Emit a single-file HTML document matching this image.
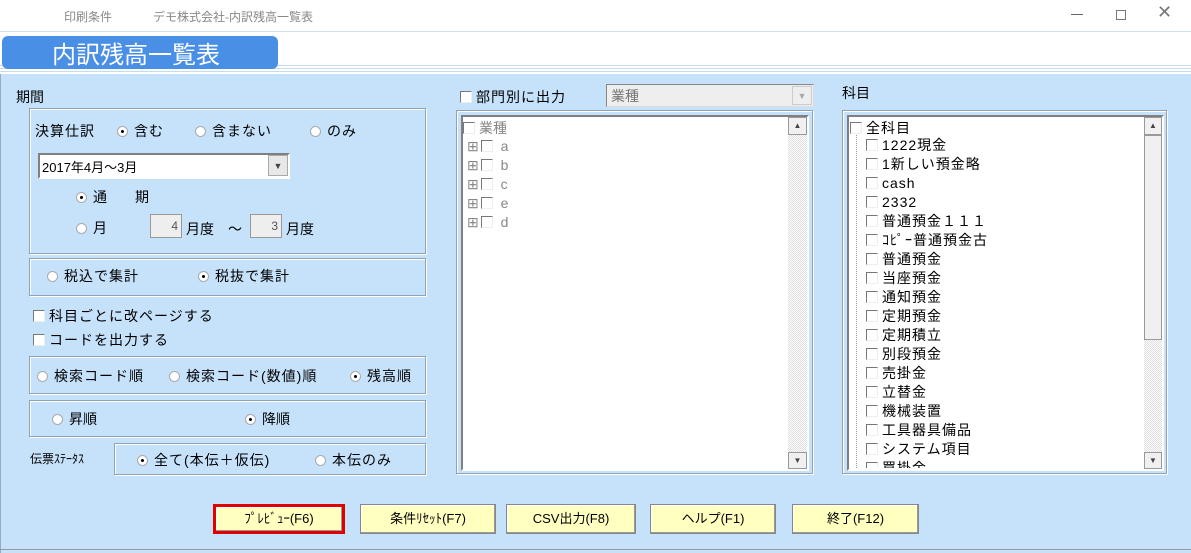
<!DOCTYPE html>
<html><head><meta charset="utf-8"><style>
*{box-sizing:border-box;margin:0;padding:0}
body{width:1191px;height:553px;overflow:hidden;background:#c6e2fb;font-family:"Liberation Sans","Noto Sans CJK JP",sans-serif;font-size:14px;color:#000;position:relative}
.a{position:absolute;white-space:nowrap}
.grp{position:absolute;border:1px solid #8fa3b8;box-shadow:inset 1px 1px 0 #fff,1px 1px 0 #fff}
.rb{display:inline-block;width:11px;height:11px;border-radius:50%;background:#fff;border:1px solid #aaa;vertical-align:-1px;margin-right:6px;position:relative}
.rb.on::after{content:"";position:absolute;left:3px;top:3px;width:3px;height:3px;background:#000;border-radius:50%}
.cb{display:inline-block;width:12px;height:12px;background:#fff;border-left:1px solid #777;border-top:1px solid #777;border-right:1px solid #eee;border-bottom:1px solid #eee;vertical-align:-1px;margin-right:4px}
.btn{position:absolute;top:504px;height:30px;background:#ffffc0;border:1px solid #888;box-shadow:inset -1px -1px 0 #999,inset 1px 1px 0 #fff;text-align:center;line-height:28px;font-size:13px}
.sunk{position:absolute;border:2px solid;border-color:#808080 #fff #fff #808080;background:#fff}
.ls{letter-spacing:1px}
</style></head><body>
<div class="a" style="left:0;top:0;width:1191px;height:32px;background:#fff"></div>
<div class="a" style="left:64px;top:8px;font-size:12px;color:#888">印刷条件</div>
<div class="a" style="left:153px;top:8px;font-size:12px;color:#888">デモ株式会社-内訳残高一覧表</div>
<div class="a" style="left:1071px;top:14px;width:12px;height:1px;background:#666"></div>
<div class="a" style="left:1116px;top:10px;width:10px;height:10px;border:1px solid #777"></div>
<div class="a" style="left:1157px;top:2px;font-size:18px;color:#777">✕</div>
<div class="a" style="left:0;top:31px;width:1191px;height:1px;background:#cfe0ee"></div>
<div class="a" style="left:0;top:32px;width:1191px;height:42px;background:#fff"></div>
<div class="a" style="left:0;top:65px;width:1191px;height:1px;background:#c6dcee"></div>
<div class="a" style="left:0;top:68px;width:1191px;height:1px;background:#c6dcee"></div>
<div class="a" style="left:0;top:71px;width:1191px;height:1px;background:#c6dcee"></div>
<div class="a" style="left:2px;top:36px;width:276px;height:33px;background:#4a8fe6;border-radius:6px"></div>
<div class="a" style="left:52px;top:35px;font-size:24px;color:#fff">内訳残高一覧表</div>
<div class="a" style="left:0;top:74px;width:1191px;height:479px;background:#c6e2fb;border-left:1px solid #9ab"></div>
<div class="a" style="left:0;top:549px;width:1191px;height:1px;background:#999"></div>

<div class="a" style="left:16px;top:87px">期間</div>
<div class="grp" style="left:29px;top:108px;width:397px;height:146px"></div>
<div class="a ls" style="left:35px;top:121px">決算仕訳</div>
<div class="a ls" style="left:117px;top:121px"><span class="rb on"></span>含む</div>
<div class="a ls" style="left:195px;top:121px"><span class="rb"></span>含まない</div>
<div class="a ls" style="left:310px;top:121px"><span class="rb"></span>のみ</div>
<div class="sunk" style="left:38px;top:153px;width:252px;height:26px"></div>
<div class="a" style="left:42px;top:157px;font-size:13px">2017年4月～3月</div>
<div class="a" style="left:268px;top:155px;width:20px;height:21px;background:#e8e8e8;border:1px solid #aaa;text-align:center;font-size:9px;line-height:20px;color:#444">▼</div>
<div class="a" style="left:76px;top:187px"><span class="rb on"></span>通　　期</div>
<div class="a" style="left:76px;top:218px"><span class="rb"></span>月</div>
<div class="a" style="left:150px;top:214px;width:32px;height:24px;background:#eee;border:1px solid #999;text-align:right;padding-right:3px;font-size:12px;line-height:22px;color:#555">4</div>
<div class="a" style="left:186px;top:219px">月度　～</div>
<div class="a" style="left:250px;top:214px;width:32px;height:24px;background:#eee;border:1px solid #999;text-align:right;padding-right:3px;font-size:12px;line-height:22px;color:#555">3</div>
<div class="a" style="left:286px;top:219px">月度</div>

<div class="grp" style="left:29px;top:258px;width:397px;height:38px"></div>
<div class="a ls" style="left:47px;top:266px"><span class="rb"></span>税込で集計</div>
<div class="a ls" style="left:198px;top:266px"><span class="rb on"></span>税抜で集計</div>
<div class="a ls" style="left:33px;top:306px"><span class="cb"></span>科目ごとに改ページする</div>
<div class="a ls" style="left:33px;top:330px"><span class="cb"></span>コードを出力する</div>
<div class="grp" style="left:29px;top:356px;width:397px;height:38px"></div>
<div class="a ls" style="left:37px;top:366px"><span class="rb"></span>検索コード順</div>
<div class="a ls" style="left:169px;top:366px"><span class="rb"></span>検索コード(数値)順</div>
<div class="a ls" style="left:350px;top:366px"><span class="rb on"></span>残高順</div>
<div class="grp" style="left:29px;top:400px;width:397px;height:37px"></div>
<div class="a" style="left:52px;top:409px"><span class="rb"></span>昇順</div>
<div class="a" style="left:245px;top:409px"><span class="rb on"></span>降順</div>
<div class="a" style="left:30px;top:450px;font-size:12px">伝票ｽﾃｰﾀｽ</div>
<div class="grp" style="left:114px;top:443px;width:312px;height:32px"></div>
<div class="a ls" style="left:137px;top:450px"><span class="rb on"></span>全て(本伝＋仮伝)</div>
<div class="a ls" style="left:315px;top:450px"><span class="rb"></span>本伝のみ</div>

<div class="a ls" style="left:460px;top:87px"><span class="cb"></span>部門別に出力</div>
<div class="a" style="left:606px;top:84px;width:208px;height:23px;background:#eee;border:1px solid #888;border-right-color:#ddd;border-bottom-color:#ddd;color:#777;padding:1px 4px">業種</div>
<div class="a" style="left:792px;top:86px;width:20px;height:19px;border:1px solid #ccc;color:#aaa;font-size:9px;text-align:center;line-height:18px">▼</div>
<div class="grp" style="left:456px;top:110px;width:357px;height:364px"></div>
<div class="sunk" style="left:461px;top:115px;width:348px;height:356px"></div>
<div class="a" style="left:788px;top:117px;width:19px;height:352px;background:repeating-conic-gradient(#ddd 0 25%,#fff 0 50%) 0 0/2px 2px"></div>
<div class="a" style="left:788px;top:117px;width:19px;height:18px;background:#f0f0f0;border:1px solid #999;font-size:8px;text-align:center;line-height:16px;color:#444">▲</div>
<div class="a" style="left:788px;top:452px;width:19px;height:17px;background:#f0f0f0;border:1px solid #999;font-size:8px;text-align:center;line-height:15px;color:#444">▼</div>
<div class="a" style="left:463px;top:118px;color:#888"><span class="cb"></span>業種</div>
<div class="a" style="left:467px;top:137px;color:#888;line-height:19px;font-size:14px">
<div>⊞<span class="cb" style="margin-left:2px"></span>&nbsp;a</div><div>⊞<span class="cb" style="margin-left:2px"></span>&nbsp;b</div><div>⊞<span class="cb" style="margin-left:2px"></span>&nbsp;c</div><div>⊞<span class="cb" style="margin-left:2px"></span>&nbsp;e</div><div>⊞<span class="cb" style="margin-left:2px"></span>&nbsp;d</div></div>

<div class="a" style="left:842px;top:83px">科目</div>
<div class="grp" style="left:842px;top:110px;width:325px;height:364px"></div>
<div class="sunk" style="left:847px;top:115px;width:317px;height:356px;overflow:hidden"></div>
<div class="a" style="left:1144px;top:117px;width:18px;height:352px;background:repeating-conic-gradient(#ddd 0 25%,#fff 0 50%) 0 0/2px 2px"></div>
<div class="a" style="left:1144px;top:117px;width:18px;height:18px;background:#f0f0f0;border:1px solid #999;font-size:8px;text-align:center;line-height:16px;color:#444">▲</div>
<div class="a" style="left:1144px;top:135px;width:18px;height:205px;background:#f0f0f0;border:1px solid #999"></div>
<div class="a" style="left:1144px;top:452px;width:18px;height:17px;background:#f0f0f0;border:1px solid #999;font-size:8px;text-align:center;line-height:15px;color:#444">▼</div>
<div class="a ls" style="left:850px;top:118px"><span class="cb"></span>全科目</div>
<div class="a" style="left:856px;top:135px;width:1px;height:333px;border-left:1px dotted #999"></div>
<div class="a ls" style="left:866px;top:136px;height:332px;overflow:hidden;line-height:19px;font-size:14px">
<div><span class="cb"></span>1222現金</div><div><span class="cb"></span>1新しい預金略</div><div><span class="cb"></span>cash</div><div><span class="cb"></span>2332</div><div><span class="cb"></span>普通預金１１１</div><div><span class="cb"></span>ｺﾋﾟｰ普通預金古</div><div><span class="cb"></span>普通預金</div><div><span class="cb"></span>当座預金</div><div><span class="cb"></span>通知預金</div><div><span class="cb"></span>定期預金</div><div><span class="cb"></span>定期積立</div><div><span class="cb"></span>別段預金</div><div><span class="cb"></span>売掛金</div><div><span class="cb"></span>立替金</div><div><span class="cb"></span>機械装置</div><div><span class="cb"></span>工具器具備品</div><div><span class="cb"></span>システム項目</div><div><span class="cb"></span>買掛金</div></div>

<div class="btn" style="left:213px;width:132px;border:3px solid #e00000;line-height:24px">ﾌﾟﾚﾋﾞｭｰ(F6)</div>
<div class="btn" style="left:360px;width:136px">条件ﾘｾｯﾄ(F7)</div>
<div class="btn" style="left:506px;width:130px">CSV出力(F8)</div>
<div class="btn" style="left:650px;width:126px">ヘルプ(F1)</div>
<div class="btn" style="left:792px;width:127px">終了(F12)</div>
</body></html>
